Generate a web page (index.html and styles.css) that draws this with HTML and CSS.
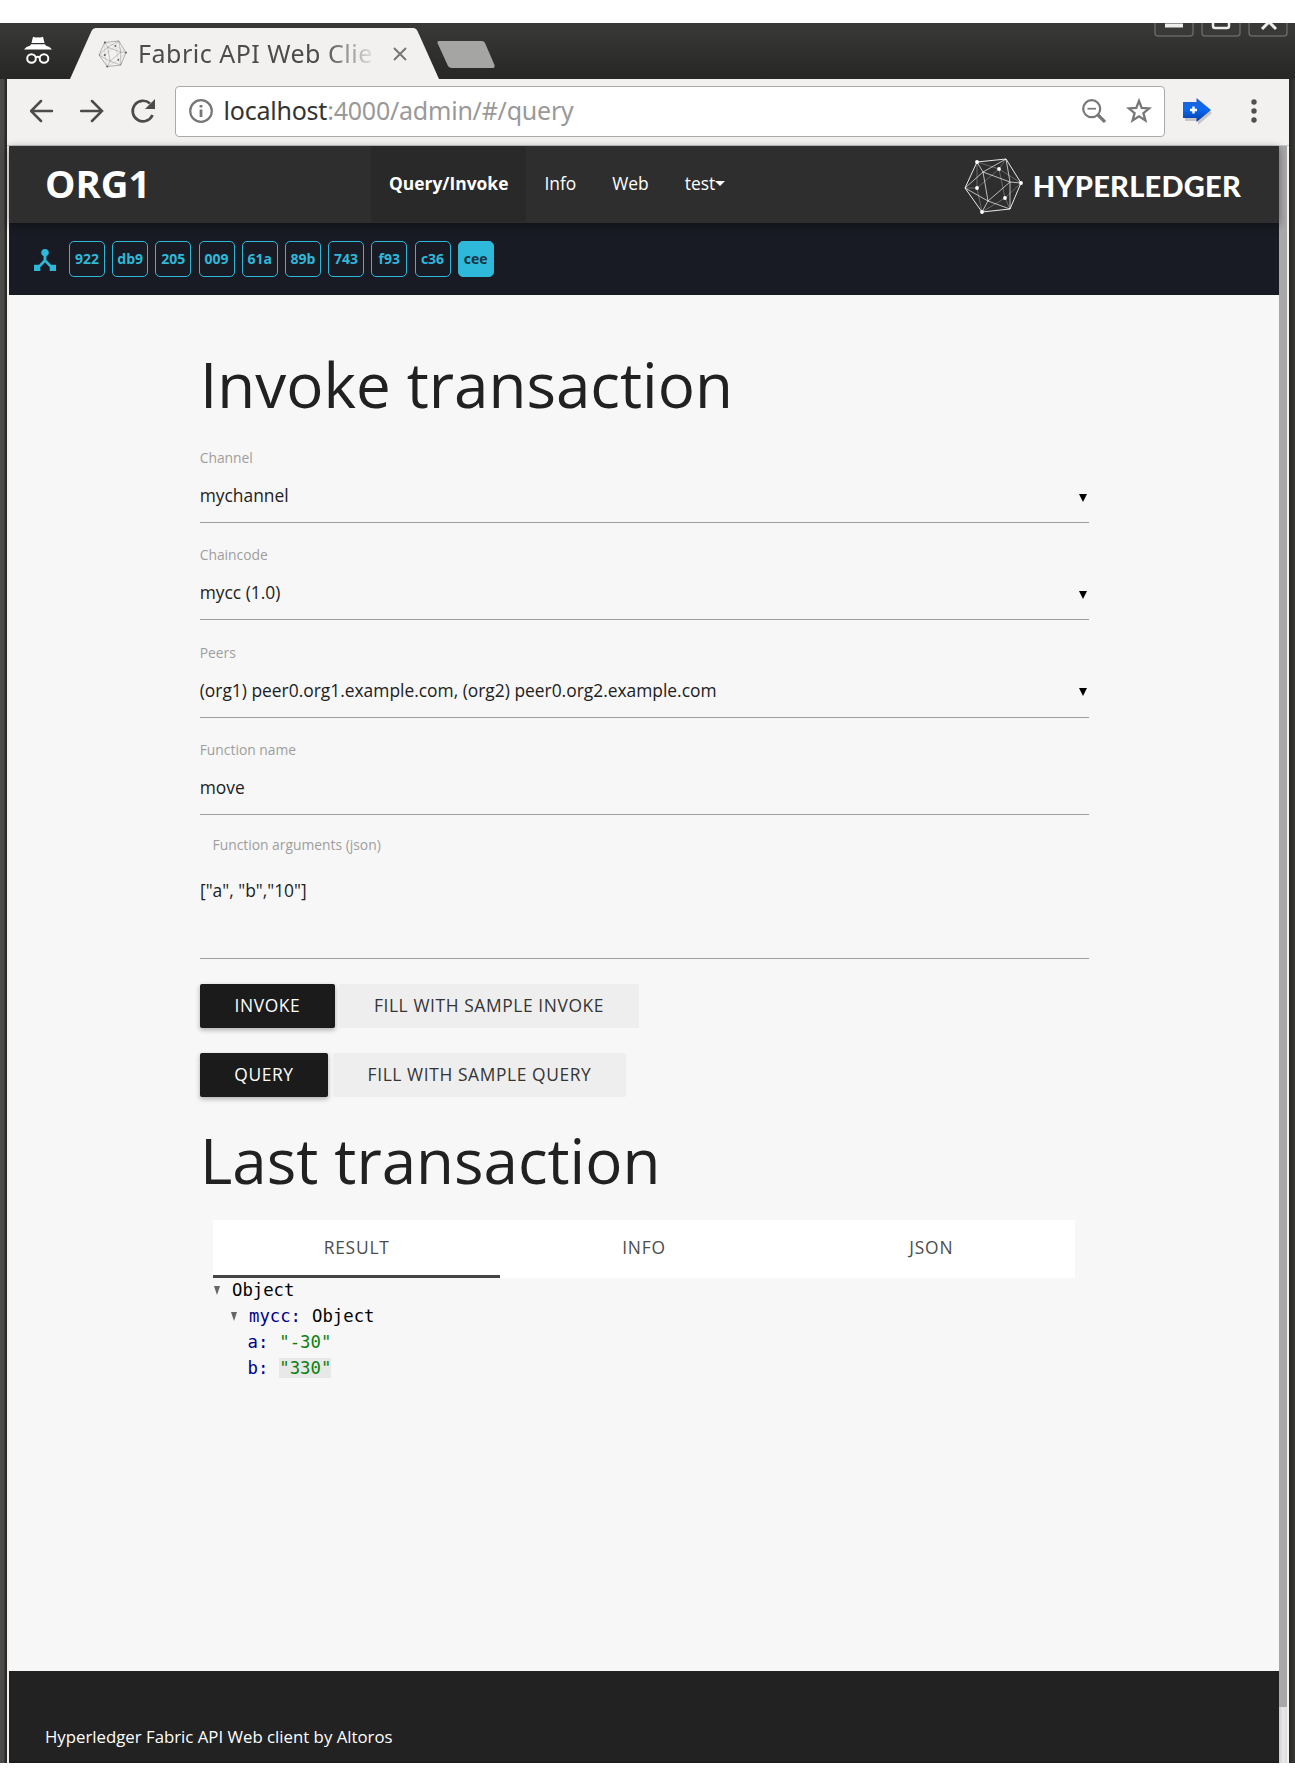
FILE: index.html
```html
<!DOCTYPE html>
<html lang="en">
<head>
<meta charset="utf-8">
<title>Fabric API Web Client</title>
<link rel="stylesheet" href="styles.css">
</head>
<body>
<svg width="0" height="0" class="defs">
  <symbol id="globe" viewBox="0 0 60 58">
    <path d="M13 5 42 2 57 26 46 52 18 55 1 31Z" fill="none" stroke="currentColor" stroke-width=".9"/>
    <path d="M13 5 19 15 42 2M19 15 1 31M19 15 46 25 57 26M42 2 46 25 46 52M19 15 24 44 46 25M1 31 24 44 46 52M24 44 18 55" fill="none" stroke="currentColor" stroke-width=".8" opacity=".85"/>
    <path d="M13 5 13 31 18 55 41 41 57 26 35 12 13 5M13 31 35 12 41 41M35 12 42 2M13 31 1 31M41 41 46 52" fill="none" stroke="currentColor" stroke-width=".8" opacity=".35"/>
    <g fill="currentColor"><circle cx="13" cy="5" r="1.9"/><circle cx="35" cy="12" r="1.9"/><circle cx="57" cy="26" r="1.9"/><circle cx="13" cy="31" r="1.9"/><circle cx="41" cy="41" r="1.9"/><circle cx="18" cy="55" r="1.9"/></g>
  </symbol>
</svg>
<div class="window">
  <header class="tabstrip">
    <svg class="incognito" viewBox="0 0 30 30"><path d="M8.500 7 10 .8Q12 1.800 15 1.300 18 1.800 20 .8L21.500 7ZM8 8.200H22L23 9.800Q27 10.600 29 13.600H1Q3 10.600 7 9.800Z" fill="#fff"/><g fill="none" stroke="#fff" stroke-width="2"><circle cx="8.500" cy="22.500" r="4.300"/><circle cx="21" cy="22.500" r="4.300"/><path d="M12.500 21.500Q14.800 20 17 21.500"/></g></svg>
    <div class="tab">
      <svg class="tab-shape" viewBox="0 0 369 51"><path d="M0 51 21.500 3Q23 0 26 0H343Q346 0 347.500 3L369 51Z" fill="#f2f1f0"/></svg>
      <svg class="favicon"><use href="#globe"/></svg>
      <span class="tab-title">Fabric API Web Clie</span>
      <svg class="tab-close" viewBox="0 0 14 14"><path d="M1 1 13 13M13 1 1 13" stroke="#777" stroke-width="2"/></svg>
    </div>
    <svg class="new-tab" viewBox="0 0 60 30"><path d="M2 1H45Q47 1 48 3L57.500 25Q58 28 56 28H15Q12 28 11 26L.5 3Q0 1 2 1Z" fill="#a5a5a3"/></svg>
    <div class="win-buttons">
      <svg viewBox="0 0 40 14"><path d="M1 0V10Q1 13 4 13H36Q39 13 39 10V0" fill="#393938" stroke="#666664" stroke-width="1.500"/><path d="M11 2.500H29" stroke="#eee" stroke-width="4"/></svg>
      <svg viewBox="0 0 40 14"><path d="M1 0V10Q1 13 4 13H36Q39 13 39 10V0" fill="#393938" stroke="#666664" stroke-width="1.500"/><path d="M12 0V3Q12 5 14 5H26Q28 5 28 3V0" fill="none" stroke="#eee" stroke-width="2.500"/></svg>
      <svg viewBox="0 0 40 14"><path d="M1 0V10Q1 13 4 13H36Q39 13 39 10V0" fill="#393938" stroke="#666664" stroke-width="1.500"/><path d="M14 6 21 -1 28 6" fill="none" stroke="#eee" stroke-width="3"/></svg>
    </div>
  </header>
  <div class="client">
    <div class="toolbar">
      <svg class="tool" viewBox="0 0 24 24"><path d="M22 12H1M11 2 1 12 11 22" class="arrow"/></svg>
      <svg class="tool" viewBox="0 0 24 24"><path d="M1 12H22M12 2 22 12 12 22" class="arrow"/></svg>
      <svg class="reload" viewBox="0 0 26 26"><path d="M22.500 17A10.300 10.300 0 1 1 20 5.500" fill="none" stroke="#4b4b4b" stroke-width="2.700"/><path d="M25 1V11H15Z" fill="#4b4b4b"/></svg>
      <div class="omnibox">
        <svg class="site-info" viewBox="0 0 24 24"><circle cx="12" cy="12" r="10.800" fill="none" stroke="#777" stroke-width="2.200"/><path d="M12 10.500V18M12 6V8.600" stroke="#777" stroke-width="2.800"/></svg>
        <span class="url"><b>localhost</b>:4000/admin/#/query</span>
        <svg class="zoom-out" viewBox="0 0 24 24"><g fill="none" stroke="#777"><circle cx="9.700" cy="9.700" r="8.500" stroke-width="2.200"/><path d="M16 16 23 23" stroke-width="3.200"/><path d="M5.500 9.700H14" stroke-width="1.700"/></g></svg>
        <svg class="star" viewBox="0 0 26 26"><path d="M13 3 15.700 10 23.200 10.400 17.400 15.100 19.400 22.500 13 18.300 6.600 22.500 8.600 15.100 2.800 10.400 10.300 10Z" fill="none" stroke="#777" stroke-width="2.300"/></svg>
      </div>
      <svg class="extension" viewBox="0 0 30 28"><defs><linearGradient id="blue" x2="0" y2="1"><stop stop-color="#2a5fc0"/><stop offset=".45" stop-color="#0a6af8"/><stop offset="1" stop-color="#063c9c"/></linearGradient></defs><path d="M1 5H14V1L28 13 14 25V21H1Z" transform="translate(1 2)" fill="#aaa" opacity=".6"/><path d="M0 4H13.500V0L28 12 13.500 24V20H0Z" fill="url(#blue)"/><path d="M10.500 8.500V15.500M7 12H14" stroke="#fff" stroke-width="2.400"/></svg>
      <svg class="menu" viewBox="0 0 6 24"><g fill="#505050"><circle cx="3" cy="3" r="2.700"/><circle cx="3" cy="12" r="2.700"/><circle cx="3" cy="21" r="2.700"/></g></svg>
    </div>
    <div class="viewport">
      <div class="page">
        <nav class="nav">
          <a class="brand">ORG1</a>
          <div class="nav-items">
            <a class="nav-item active">Query/Invoke</a>
            <a class="nav-item">Info</a>
            <a class="nav-item">Web</a>
            <a class="nav-item">test<i class="caret"></i></a>
          </div>
          <div class="logo"><svg class="logo-globe"><use href="#globe"/></svg><span class="logo-text">HYPERLEDGER</span></div>
        </nav>
        <div class="blocks">
          <svg class="hub" viewBox="3 3 18 18"><path d="M17 16l-4-4V8.820C14.160 8.400 15 7.300 15 6c0-1.660-1.340-3-3-3S9 4.340 9 6c0 1.300.84 2.400 2 2.820V12l-4 4H3v5h5v-3.050l4-4.200 4 4.200V21h5v-5h-4z"/></svg>
          <span class="block">922</span><span class="block">db9</span><span class="block">205</span><span class="block">009</span><span class="block">61a</span><span class="block">89b</span><span class="block">743</span><span class="block">f93</span><span class="block">c36</span><span class="block current">cee</span>
        </div>
        <main class="main">
          <h1 class="title">Invoke transaction</h1>
          <div class="fields">
            <div class="field"><label>Channel</label><div class="value">mychannel<i class="arrow-down"></i></div></div>
            <div class="field"><label>Chaincode</label><div class="value">mycc (1.0)<i class="arrow-down"></i></div></div>
            <div class="field"><label>Peers</label><div class="value">(org1) peer0.org1.example.com, (org2) peer0.org2.example.com<i class="arrow-down"></i></div></div>
            <div class="field"><label>Function name</label><div class="value">move</div></div>
          </div>
          <div class="field args"><label>Function arguments (json)</label><div class="area">["a", "b","10"]</div></div>
          <div class="actions"><a class="btn invoke">INVOKE</a><a class="btn flat fill-invoke">FILL WITH SAMPLE INVOKE</a></div>
          <div class="actions query-actions"><a class="btn query">QUERY</a><a class="btn flat fill-query">FILL WITH SAMPLE QUERY</a></div>
          <h1 class="title last">Last transaction</h1>
          <div class="result">
            <div class="tabs"><a class="result-tab selected">RESULT</a><a class="result-tab">INFO</a><a class="result-tab">JSON</a></div>
            <div class="tree">
              <div class="node"><i class="toggle"></i>Object</div>
              <div class="node child"><i class="toggle"></i><span class="key">mycc:</span>Object</div>
              <div class="node leaf"><span class="key">a:</span><span class="string">"-30"</span></div>
              <div class="node leaf"><span class="key">b:</span><span class="string changed">"330"</span></div>
            </div>
          </div>
        </main>
        <footer class="footer">Hyperledger Fabric API Web client by Altoros</footer>
      </div>
      <div class="scrollbar"><div class="thumb"></div></div>
    </div>
  </div>
</div>
</body>
</html>
```
FILE: styles.css
```css
* { box-sizing: border-box; }
body { margin: 0; background: #fff; font-family: "Open Sans", sans-serif; font-size: 17.4px; }
svg { display: block; flex: none; }
.defs { position: absolute; }

/* Browser window */
.window { margin-top: 23px; height: 1740px; overflow: hidden; background: linear-gradient(90deg, #4b4a49 0 4px, #2b2a28 5px 1290px, #383734); }
.tabstrip { height: 56px; display: flex; align-items: flex-start; background: linear-gradient(#393937, #272725); }
.incognito { width: 30px; height: 30px; margin: 13px 0 0 23px; }
.tab { position: relative; display: flex; align-items: center; width: 369px; height: 51px; margin: 5px 0 0 17px; padding-left: 28px; }
.tab-shape { position: absolute; left: 0; top: 0; width: 369px; height: 51px; }
.favicon { position: relative; width: 30px; height: 28px; color: #555; }
.tab-title { position: relative; width: 240px; margin: -1px 0 0 10px; white-space: nowrap; font: 25px/40px "Noto Sans", sans-serif; letter-spacing: .5px; color: #4c4c4c; -webkit-mask-image: linear-gradient(90deg, #000 185px, transparent 240px); mask-image: linear-gradient(90deg, #000 185px, transparent 240px); }
.tab-close { position: relative; width: 14px; height: 14px; margin-left: 15px; }
.new-tab { width: 60px; height: 30px; margin: 17px 0 0 -2px; }
.win-buttons { display: flex; gap: 7px; margin: 0 7px 0 auto; }
.win-buttons svg { width: 40px; height: 14px; }

.client { height: 1684px; margin: 0 6px 0 7px; background: #f2f1f0; }
.toolbar { display: flex; align-items: center; height: 67px; padding: 0 0 3px 23px; border-bottom: 1px solid #c5c9c5; }
.tool { width: 24px; height: 24px; margin-right: 26px; }
.arrow { fill: none; stroke: #4b4b4b; stroke-width: 2.5; stroke-linecap: round; }
.reload { width: 26px; height: 26px; margin-right: 19px; }
.omnibox { display: flex; align-items: center; width: 990px; height: 51px; margin-top: 1px; padding: 0 12px 0 13px; background: #fff; border: 1px solid #aaa; border-radius: 4px; }
.site-info { width: 24px; height: 24px; }
.url { margin: -2px auto 0 10.5px; font: 25px/40px "Noto Sans", sans-serif; letter-spacing: -.22px; color: #999; }
.url b { font-weight: 400; color: #333; }
.zoom-out { width: 24px; height: 24px; margin-right: 20px; }
.star { width: 26px; height: 26px; }
.extension { width: 30px; height: 28px; margin: 2px 0 0 18px; }
.menu { width: 6px; height: 24px; margin-left: 38px; }

/* Page */
.viewport { display: flex; height: 1617px; padding: 0 2px; }
.page { width: 1270px; display: flex; flex-direction: column; background: #f7f7f7; }
.scrollbar { width: 8px; background: linear-gradient(90deg, #ccc, #e8e8e8 50%, #dcdcdc); }
.thumb { height: 1561px; background: #a8a8a8; }
.nav { position: relative; display: flex; flex: none; height: 77px; color: #fff; background: #2e2e2e; box-shadow: 0 2px 8px rgba(0,0,0,.4); line-height: 76px; }
.brand { width: 362px; padding-left: 36px; font-size: 38.3px; font-weight: 700; line-height: 74px; }
.nav-items { display: flex; height: 76px; }
.nav-item { padding: 0 18px; display: flex; align-items: center; line-height: 74px; padding-bottom: 2px; }
.nav-item.active { background: #292929; font-weight: 700; }
.caret { border: 5.5px solid transparent; border-top-color: #fff; border-bottom: 0; margin-top: 0; }
.logo { display: flex; align-items: center; margin: 0 38px 0 auto; }
.logo-globe { width: 60px; height: 58px; color: #fff; margin-top: 2px; }
.logo-text { margin: 3px 0 0 9px; font-family: Lato, sans-serif; font-size: 29px; font-weight: 900; letter-spacing: .25px; }

.blocks { display: flex; align-items: center; flex: none; height: 72px; padding-left: 25px; background: #191b24; }
.hub { width: 22px; height: 22px; margin: 2px 13px 0 0; fill: #2eb8d9; stroke: #2eb8d9; stroke-width: .3; }
.block { width: 36px; height: 36px; margin-right: 7.200px; border: 1px solid #2eb8d9; border-radius: 5px; color: #2eb8d9; font-size: 14px; font-weight: 700; line-height: 33px; text-align: center; }
.block.current { background: #2eb8d9; color: #17323f; }

.main { flex: 1; width: 889px; margin-left: 191px; padding-top: 55px; color: #212121; }
.title { margin: 0 0 30px; font-size: 61.9px; font-weight: 400; line-height: 69px; height: 68px; }
.fields { display: flex; flex-direction: column; gap: 22.400px; margin-left: -.3px; }
.field label { display: block; font-size: 13.850px; line-height: 20px; color: #9e9e9e; }
.value { display: flex; justify-content: space-between; align-items: center; height: 55px; border-bottom: 1px solid #9e9e9e; }
.arrow-down { border: 4.5px solid transparent; border-top: 8px solid #000; border-bottom: 0; margin: 5px 2px 0 0; }
.args { margin-top: 20px; }
.args label { padding-left: 12.500px; }
.area { height: 104px; padding-top: 22px; line-height: 26px; border-bottom: 1px solid #9e9e9e; }
.actions { display: flex; gap: 4px; margin-top: 25px; }
.query-actions { gap: 5px; }
.btn { height: 44px; border-radius: 2px; background: #1b1b1b; color: #fff; line-height: 43px; letter-spacing: .6px; text-align: center; box-shadow: 0 2px 5px rgba(0,0,0,.3); }
.btn.flat { background: #eee; color: #343434; box-shadow: none; }
.invoke { width: 135px; }
.fill-invoke { width: 300px; }
.query { width: 128px; }
.fill-query { width: 293px; }
.title.last { margin: 29px 0 26px; }
.result { padding: 0 14px 0 13px; }
.tabs { display: flex; height: 58px; background: #fff; }
.result-tab { flex: 1; color: #4c4c4c; line-height: 55px; text-align: center; letter-spacing: .8px; }
.result-tab.selected { border-bottom: 3px solid #444; }
.tree { margin-top: -1px; font-family: "DejaVu Sans Mono", monospace; font-size: 17.300px; line-height: 26px; color: #000; }
.node { height: 26px; display: flex; align-items: center; white-space: pre; }
.child { padding-left: 17px; }
.leaf { padding-left: 34.5px; gap: 11px; }
.child .key { margin-right: 11px; }
.toggle { margin: 0 12px 0 1px; border: 3px solid transparent; border-top: 9px solid #666; border-bottom: 0; }
.key { color: #00008b; }
.string { color: #0b7f0b; line-height: 20px; }
.changed { background: #e8e8e8; }
.footer { flex: none; height: 92px; padding: 53px 0 0 36px; background: #222; border-bottom: 2px solid #1d1b1c; color: #fff; font-size: 16.8px; line-height: 26px; }
```
